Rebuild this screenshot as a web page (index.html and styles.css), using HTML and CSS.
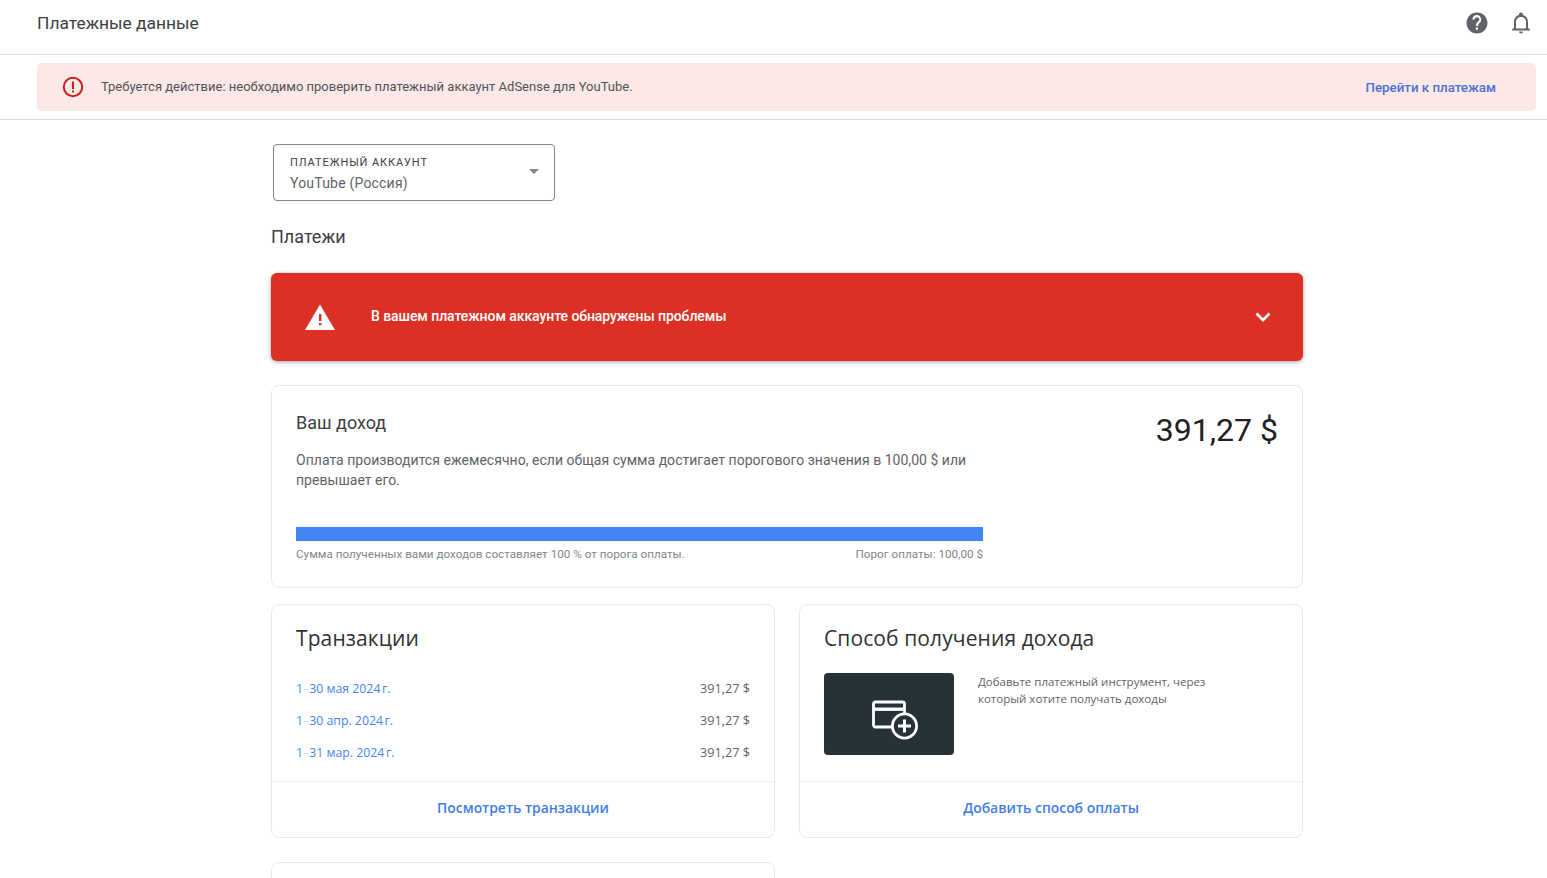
FILE: index.html
```html
<!DOCTYPE html>
<html lang="ru">
<head>
    <meta charset="UTF-8">
    <title>Платежные данные</title>
    <link rel="stylesheet" href="styles.css">
</head>
<body>
    <header class="topbar">
        <h1>Платежные данные</h1>
        <div class="topbar-icons">
            <svg width="24" height="24" viewBox="0 0 24 24"><path fill="#5f6368" d="M12 1.500C6.200 1.500 1.500 6.200 1.500 12S6.200 22.500 12 22.500 22.500 17.800 22.500 12 17.800 1.500 12 1.500zm1 17.300h-2.200v-2.200H13v2.200zm2.500-7.900l-1 1c-.8.800-1.300 1.500-1.300 3h-2.200v-.5c0-1.200.5-2.300 1.300-3.100l1.300-1.400c.4-.4.700-.900.700-1.500 0-1.200-1-2.200-2.200-2.200S9.600 7.200 9.600 8.400H7.400c0-2.400 2-4.400 4.400-4.400s4.400 2 4.400 4.400c0 1-.3 1.800-.7 2.500z"/></svg>
            <svg width="24" height="24" viewBox="0 0 24 24"><path fill="#5f6368" d="M12 22.500c1.100 0 2-.9 2-2h-4c0 1.100.9 2 2 2zm7-5.500v-6c0-3.400-1.900-6.200-5-6.900v-.6c0-1.100-.9-2-2-2s-2 .9-2 2v.6c-3.100.7-5 3.500-5 6.900v6l-2 1.500v1h18v-1L19 17zm-2 .5H7V11c0-2.800 1.900-5 5-5s5 2.200 5 5v6.500z"/></svg>
        </div>
    </header>

    <div class="notice-wrap">
        <div class="notice">
            <svg class="notice-icon" width="24" height="24" viewBox="0 0 24 24"><circle cx="12" cy="12" r="9.200" fill="none" stroke="#c5221f" stroke-width="2"/><rect x="11" y="6.500" width="2" height="7.500" fill="#c5221f"/><rect x="11" y="15.500" width="2" height="2" fill="#c5221f"/></svg>
            <span class="notice-text">Требуется действие: необходимо проверить платежный аккаунт AdSense для YouTube.</span>
            <a href="#" class="notice-link">Перейти к платежам</a>
        </div>
    </div>

    <main class="content">
        <div class="account-select">
            <div>
                <div class="account-label">ПЛАТЕЖНЫЙ АККАУНТ</div>
                <div class="account-value">YouTube (Россия)</div>
            </div>
            <span class="caret"></span>
        </div>

        <h2 class="section-title">Платежи</h2>

        <div class="alert">
            <svg class="alert-icon" width="32" height="28" viewBox="0 0 32 28"><path fill="#fff" d="M16 1.500L31 27H1z"/><rect x="15" y="11" width="2.400" height="7" fill="#d93025"/><rect x="15" y="20" width="2.400" height="2.400" fill="#d93025"/></svg>
            <span class="alert-text">В вашем платежном аккаунте обнаружены проблемы</span>
            <svg class="alert-chevron" width="18" height="12" viewBox="0 0 18 12"><path d="M2.500 2.500L9 9l6.500-6.500" fill="none" stroke="#fff" stroke-width="2.800"/></svg>
        </div>

        <section class="card income">
            <div class="income-main">
                <h3>Ваш доход</h3>
                <p>Оплата производится ежемесячно, если общая сумма достигает порогового значения в 100,00 $ или превышает его.</p>
                <div class="progress"></div>
                <div class="progress-labels">
                    <span>Сумма полученных вами доходов составляет 100 % от порога оплаты.</span>
                    <span>Порог оплаты: 100,00 $</span>
                </div>
            </div>
            <div class="income-total">391,27 $</div>
        </section>

        <div class="card-grid">
            <section class="card">
                <div class="card-body">
                    <h3 class="card-title">Транзакции</h3>
                    <ul class="tx-list">
                        <li><a href="#">1<span class="tx-dash">–</span>30 мая 2024&#8239;г.</a><span>391,27 $</span></li>
                        <li><a href="#">1<span class="tx-dash">–</span>30 апр. 2024&#8239;г.</a><span>391,27 $</span></li>
                        <li><a href="#">1<span class="tx-dash">–</span>31 мар. 2024&#8239;г.</a><span>391,27 $</span></li>
                    </ul>
                </div>
                <a href="#" class="card-action">Посмотреть транзакции</a>
            </section>

            <section class="card">
                <div class="card-body">
                    <h3 class="card-title">Способ получения дохода</h3>
                    <div class="method">
                        <div class="method-tile">
                            <svg class="method-icon" width="48" height="40" viewBox="0 0 48 40"><path d="M22 27H4.500a2 2 0 0 1-2-2V4a2 2 0 0 1 2-2h27a2 2 0 0 1 2 2v12" fill="none" stroke="#fff" stroke-width="2.800"/><rect x="2.500" y="7.500" width="31" height="3.400" fill="#fff"/><circle cx="33.500" cy="26" r="12.100" fill="#263238" stroke="#fff" stroke-width="2.800"/><path d="M33.500 19.500v13M27 26h13" stroke="#fff" stroke-width="3"/></svg>
                        </div>
                        <p>Добавьте платежный инструмент, через который хотите получать доходы</p>
                    </div>
                </div>
                <a href="#" class="card-action">Добавить способ оплаты</a>
            </section>

            <section class="card stub"></section>
        </div>
    </main>
</body>
</html>
```

FILE: styles.css
```css
html, body {
    height: 878px;
    overflow: hidden;
}
body {
    margin: 0;
    background-color: #fff;
    color: #3c4043;
    font-family: Roboto, 'Liberation Sans', sans-serif;
}
a {
    text-decoration: none;
    color: #1a73e8;
}
h1, h2, h3, p, ul {
    margin: 0;
    padding: 0;
    font-weight: 400;
}
.topbar {
    height: 54px;
    padding: 0 14px 0 37px;
    display: flex;
    align-items: center;
    justify-content: space-between;
    border-bottom: 1px solid #dadce0;
}
.topbar h1 {
    font-size: 17.400px;
    color: #3c4043;
    margin-top: -8px;
}
.topbar-icons {
    display: flex;
    gap: 20px;
    margin-top: -8px;
}
.notice-wrap {
    height: 65px;
    padding: 8px 11px 8px 37px;
    box-sizing: border-box;
    border-bottom: 1px solid #dadce0;
}
.notice {
    height: 48px;
    background-color: #fce8e6;
    border-radius: 5px;
    display: flex;
    align-items: center;
    padding: 0 40px 0 24px;
}
.notice-icon {
    margin-right: 16px;
}
.notice-text {
    flex: 1;
    color: #4f5357;
    font-size: 13px;
    margin-top: -1px;
}
.notice-link {
    color: #4a6fd8;
    font-size: 13.300px;
    font-weight: 500;
}
.content {
    width: 1032px;
    margin-left: 271px;
}
.account-select {
    width: 282px;
    height: 57px;
    box-sizing: border-box;
    margin: 24px 0 0 2px;
    padding: 11px 15px 7px 16px;
    border: 1px solid #80868b;
    border-radius: 4px;
    display: flex;
    justify-content: space-between;
    align-items: center;
}
.account-label {
    font-size: 11px;
    letter-spacing: 0.900px;
    color: #3c4043;
    line-height: 16px;
}
.account-value {
    font-size: 14px;
    letter-spacing: 0.200px;
    color: #5f6368;
    line-height: 24px;
}
.caret {
    border-left: 5px solid transparent;
    border-right: 5px solid transparent;
    border-top: 5px solid #80868b;
    margin-top: -7px;
}
.section-title {
    font-size: 18px;
    line-height: 24px;
    color: #3c4043;
    margin-top: 24px;
}
.alert {
    height: 88px;
    margin-top: 24px;
    background-color: #dc3025;
    border-radius: 6px;
    box-shadow: 0 1px 4px rgba(60, 64, 67, 0.5);
    display: flex;
    align-items: center;
    padding: 0 31px 0 33px;
    color: #fff;
}
.alert-text {
    flex: 1;
    margin-left: 35px;
    font-size: 14px;
    font-weight: 500;
    letter-spacing: -0.070px;
    margin-top: -2px;
}
.card {
    border: 1px solid #e8eaed;
    border-radius: 8px;
    box-sizing: border-box;
    background-color: #fff;
    display: flex;
    flex-direction: column;
}
.income {
    height: 203px;
    margin-top: 24px;
    flex-direction: row;
    justify-content: space-between;
    padding: 25px 24px 0;
}
.income-main {
    width: 687px;
}
.income-main h3 {
    font-size: 18px;
    line-height: 24px;
    color: #3c4043;
}
.income-main p {
    font-size: 14px;
    line-height: 20px;
    color: #5f6368;
    margin-top: 15px;
    letter-spacing: 0.030px;
}
.progress {
    height: 14px;
    background-color: #4285f4;
    margin-top: 37px;
}
.progress-labels {
    display: flex;
    justify-content: space-between;
    font-size: 11.700px;
    line-height: 16px;
    color: #80868b;
    margin-top: 5px;
}
.income-total {
    font-size: 32px;
    line-height: 40px;
    color: #202124;
    margin-top: -1px;
}
.card-grid {
    display: grid;
    grid-template-columns: 504px 504px;
    gap: 24px;
    margin-top: 16px;
    grid-auto-rows: 234px;
}
.card-body {
    flex: 1;
    padding: 19px 24px 0;
}
.card-title {
    font-family: 'Open Sans', 'Noto Sans', sans-serif;
    font-size: 21px;
    line-height: 28px;
    color: #303134;
    letter-spacing: 0.100px;
}
.tx-list {
    list-style: none;
    margin-top: 20px;
}
.tx-list li {
    display: flex;
    justify-content: space-between;
    height: 32px;
    line-height: 32px;
    font-family: 'Open Sans', 'Noto Sans', sans-serif;
    font-size: 12.700px;
    color: #5f6368;
}
.tx-list a {
    color: #4285f4;
    font-size: 12.300px;
    padding-top: 1px;
}
.tx-dash {
    color: #d5e3fc;
}
.method {
    display: flex;
    gap: 24px;
    margin-top: 21px;
}
.method-tile {
    width: 130px;
    height: 82px;
    background-color: #263238;
    border-radius: 4px;
    flex-shrink: 0;
    display: flex;
    align-items: center;
    justify-content: center;
}
.method-icon {
    margin: 12px 0 0 12px;
}
.method p {
    font-family: 'Open Sans', 'Noto Sans', sans-serif;
    font-size: 11.500px;
    line-height: 17px;
    color: #5f6368;
    width: 240px;
}
.card-action {
    height: 51px;
    padding-bottom: 4px;
    border-top: 1px solid #eeeff1;
    display: flex;
    align-items: center;
    justify-content: center;
    font-family: 'Open Sans', 'Noto Sans', sans-serif;
    font-size: 13.900px;
    font-weight: 600;
    color: #3f7de8;
}
.stub {
    height: 234px;
}
```
